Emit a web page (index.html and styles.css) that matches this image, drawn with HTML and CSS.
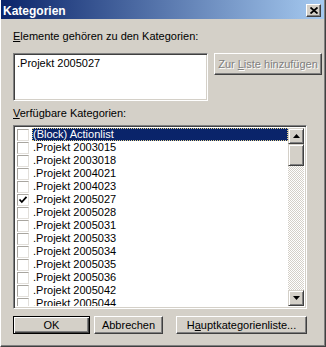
FILE: index.html
```html
<!DOCTYPE html>
<html lang="de">
  <head>
    <meta charset="UTF-8" />
    <title>Kategorien</title>
    <link rel="stylesheet" href="styles.css">
  </head>
  <body>
    <div class="dialog">
      <div class="titlebar">
        <span class="title">Kategorien</span>
        <div class="close">
          <svg width="8" height="7" viewBox="0 0 8 7">
            <path d="M0.5 0.5 L7.5 6.5 M7.5 0.5 L0.5 6.5" stroke="#000" stroke-width="1.8" />
          </svg>
        </div>
      </div>

      <div class="content">
        <div class="lbl"><u>E</u>lemente gehören zu den Kategorien:</div>
        <div class="top-row">
          <div class="box sunken">.Projekt 2005027</div>
          <div class="btn add disabled"><span>Zur <u>L</u>iste hinzufügen</span></div>
        </div>

        <div class="lbl lbl2"><u>V</u>erfügbare Kategorien:</div>
        <div class="list sunken">
          <div class="items">
            <div class="row"><span class="chk"></span><span class="txt selected">(Block) Actionlist</span></div>
            <div class="row"><span class="chk"></span><span class="txt">.Projekt 2003015</span></div>
            <div class="row"><span class="chk"></span><span class="txt">.Projekt 2003018</span></div>
            <div class="row"><span class="chk"></span><span class="txt">.Projekt 2004021</span></div>
            <div class="row"><span class="chk"></span><span class="txt">.Projekt 2004023</span></div>
            <div class="row">
              <span class="chk">
                <svg width="10" height="10" viewBox="0 0 10 10">
                  <path d="M1.5 4.5 L3.8 7 L8.5 1.8" fill="none" stroke="#000" stroke-width="1.8" />
                </svg>
              </span>
              <span class="txt">.Projekt 2005027</span>
            </div>
            <div class="row"><span class="chk"></span><span class="txt">.Projekt 2005028</span></div>
            <div class="row"><span class="chk"></span><span class="txt">.Projekt 2005031</span></div>
            <div class="row"><span class="chk"></span><span class="txt">.Projekt 2005033</span></div>
            <div class="row"><span class="chk"></span><span class="txt">.Projekt 2005034</span></div>
            <div class="row"><span class="chk"></span><span class="txt">.Projekt 2005035</span></div>
            <div class="row"><span class="chk"></span><span class="txt">.Projekt 2005036</span></div>
            <div class="row"><span class="chk"></span><span class="txt">.Projekt 2005042</span></div>
            <div class="row"><span class="chk"></span><span class="txt">.Projekt 2005044</span></div>
          </div>
          <div class="scrollbar">
            <div class="sb-btn raised">
              <svg width="7" height="4" viewBox="0 0 7 4"><path d="M3.5 0 L7 4 L0 4 Z" fill="#000" /></svg>
            </div>
            <div class="track">
              <div class="thumb raised"></div>
            </div>
            <div class="sb-btn raised">
              <svg width="7" height="4" viewBox="0 0 7 4"><path d="M0 0 L7 0 L3.5 4 Z" fill="#000" /></svg>
            </div>
          </div>
        </div>

        <div class="buttons">
          <div class="btn default ok"><span>OK</span></div>
          <div class="btn cancel"><span>Abbrechen</span></div>
          <div class="btn master"><span>H<u>a</u>uptkategorienliste...</span></div>
        </div>
      </div>
    </div>
  </body>
</html>
```

FILE: styles.css
```css
body {
  margin: 0;
  background: #d4d0c8;
  font-family: "Liberation Sans", Arial, sans-serif;
  font-size: 11px;
  color: #000;
}

.dialog {
  width: 326px;
  height: 347px;
  box-sizing: border-box;
  border-left: 1px solid #fff;
  border-right: 1px solid #404040;
  border-bottom: 1px solid #404040;
  box-shadow: inset -1px -1px #808080;
  padding-right: 1px;
}

.titlebar {
  height: 19px;
  box-sizing: border-box;
  padding: 4px 0 0 2px;
  display: flex;
  background: linear-gradient(to right, #0a246a, #a6caf0);
}

.title {
  color: #fff;
  font-weight: bold;
  font-size: 12px;
  line-height: 15px;
}

.close {
  margin-left: auto;
  margin-right: 3px;
  width: 15px;
  height: 13px;
  box-sizing: border-box;
  background: #d4d0c8;
  border: 1px solid;
  border-color: #fff #404040 #404040 #fff;
  box-shadow: inset -1px -1px #808080;
  display: flex;
  align-items: center;
  justify-content: center;
}

.content {
  padding: 11px 0 0 12px;
}

.lbl {
  line-height: 13px;
}

.lbl2 {
  margin-top: 6px;
}

.sunken {
  box-sizing: border-box;
  border: 1px solid;
  border-color: #808080 #fff #fff #808080;
  box-shadow: inset 1px 1px #404040, inset -1px -1px #d4d0c8;
  background: #fff;
}

.raised {
  box-sizing: border-box;
  background: #d4d0c8;
  border: 1px solid;
  border-color: #d4d0c8 #404040 #404040 #d4d0c8;
  box-shadow: inset 1px 1px #fff, inset -1px -1px #808080;
}

.top-row {
  display: flex;
  margin-top: 10px;
}

.box {
  width: 195px;
  height: 48px;
  padding: 3px 0 0 3px;
  line-height: 13px;
}

.btn {
  box-sizing: border-box;
  height: 18px;
  border: 1px solid;
  border-color: #fff #404040 #404040 #fff;
  box-shadow: inset -1px -1px #808080;
  display: flex;
  align-items: center;
  justify-content: center;
  line-height: 13px;
}

.add {
  margin-left: 6px;
  width: 108px;
  height: 22px;
}

.disabled {
  color: #808080;
  text-shadow: 1px 1px #fff;
}

.list {
  margin-top: 5px;
  width: 294px;
  height: 184px;
  display: flex;
  padding: 2px;
}

.items {
  flex: 1;
  overflow: hidden;
}

.row {
  height: 13px;
  display: flex;
  align-items: center;
}

.chk {
  width: 12px;
  height: 12px;
  box-sizing: border-box;
  margin-left: 1px;
  border: 1px solid;
  border-color: #a8a59f #e2dfda #e2dfda #a8a59f;
  display: flex;
  align-items: center;
  justify-content: center;
}

.txt {
  flex: 1;
  margin-left: 3px;
  padding-left: 1px;
  line-height: 13px;
  height: 13px;
}

.selected {
  background: #0a246a;
  color: #fff;
  outline: 1px dotted #e6d58c;
  outline-offset: -1px;
}

.scrollbar {
  width: 16px;
  display: flex;
  flex-direction: column;
}

.sb-btn {
  height: 16px;
  display: flex;
  align-items: center;
  justify-content: center;
}

.track {
  flex: 1;
  background: repeating-conic-gradient(#fff 0 25%, #d4d0c8 0 50%) 0 0 / 2px 2px;
}

.thumb {
  height: 22px;
}

.buttons {
  display: flex;
  margin-top: 7px;
}

.ok {
  width: 77px;
  border-color: #000;
  box-shadow: inset 1px 1px #fff, inset -1px -1px #404040, inset -2px -2px #808080;
}

.cancel {
  width: 69px;
  margin-left: 4px;
}

.master {
  width: 131px;
  margin-left: 13px;
}
```
